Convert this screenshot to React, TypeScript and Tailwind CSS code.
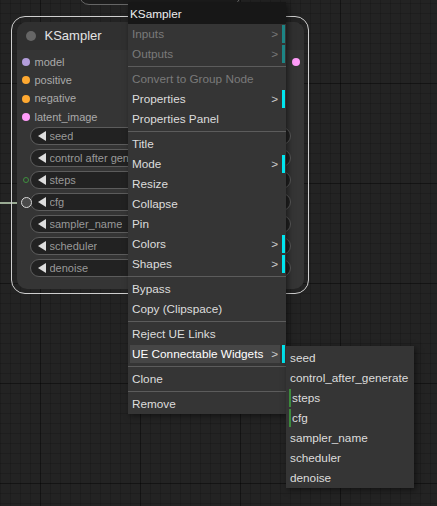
type MenuItem = { label: string; disabled?: boolean; sub?: boolean; active?: boolean } | 'sep';

const menu: MenuItem[] = [
  { label: 'Inputs', disabled: true, sub: true },
  { label: 'Outputs', disabled: true, sub: true },
  'sep',
  { label: 'Convert to Group Node', disabled: true },
  { label: 'Properties', sub: true },
  { label: 'Properties Panel' },
  'sep',
  { label: 'Title' },
  { label: 'Mode', sub: true },
  { label: 'Resize' },
  { label: 'Collapse' },
  { label: 'Pin' },
  { label: 'Colors', sub: true },
  { label: 'Shapes', sub: true },
  'sep',
  { label: 'Bypass' },
  { label: 'Copy (Clipspace)' },
  'sep',
  { label: 'Reject UE Links' },
  { label: 'UE Connectable Widgets', sub: true, active: true },
  'sep',
  { label: 'Clone' },
  'sep',
  { label: 'Remove' },
];

const subItems = [
  { label: 'seed' },
  { label: 'control_after_generate' },
  { label: 'steps', linked: true },
  { label: 'cfg', linked: true },
  { label: 'sampler_name' },
  { label: 'scheduler' },
  { label: 'denoise' },
];

const inputs = [
  { name: 'model', color: 'bg-[#b39ddb]' },
  { name: 'positive', color: 'bg-[#ffa931]' },
  { name: 'negative', color: 'bg-[#ffa931]' },
  { name: 'latent_image', color: 'bg-[#ff9cf9]' },
];

const widgets = ['seed', 'control after generate', 'steps', 'cfg', 'sampler_name', 'scheduler', 'denoise'];

const Arrow = () => (
  <svg width="8" height="10" viewBox="0 0 8 10" className="shrink-0">
    <polygon points="8,0 8,10 0,5" fill="#dddddd" />
  </svg>
);

const App = () => {
  return (
    <div className="relative w-[437px] h-[506px] overflow-hidden bg-[#232323] bg-[image:linear-gradient(to_right,rgba(0,0,0,0.35)_1px,transparent_1px),linear-gradient(to_bottom,rgba(0,0,0,0.35)_1px,transparent_1px),linear-gradient(to_right,rgba(0,0,0,0.14)_1px,transparent_1px),linear-gradient(to_bottom,rgba(0,0,0,0.14)_1px,transparent_1px)] bg-[size:100px_100px,100px_100px,10px_10px,10px_10px] bg-[position:40px_83px] font-['Liberation_Sans',Arial,sans-serif]">
      {/* bottom of the node above */}
      <div className="absolute left-[79px] top-[-20px] w-[162px] h-[25px] rounded-b-[10px] border border-[#666] bg-[#1c1c1c]" />

      {/* link into cfg */}
      <div className="absolute left-0 top-[202px] w-[22px] h-[2px] bg-[#9aab94]" />

      {/* selected node */}
      <div className="absolute left-[11px] top-[16px] w-[298px] h-[278px] rounded-[14px] border-[1.5px] border-[#cfcfcf] p-[4.5px]">
        <div className="flex h-full flex-col rounded-[10px] bg-[#353535]">
          <div className="flex h-[28px] items-center rounded-t-[10px] bg-[#303030] pl-[9px]">
            <div className="h-[10px] w-[10px] rounded-full bg-[#666]" />
            <span className="ml-[9px] pt-[1px] text-[13px] text-[#e4e4e4]">KSampler</span>
          </div>
          <div className="flex flex-col pt-[3.5px]">
            {inputs.map((inp, i) => (
              <div key={inp.name} className="flex h-[18.3px] items-center justify-between pl-[5px] pr-[4px]">
                <div className="flex items-center">
                  <div className={`h-[8px] w-[8px] rounded-full ${inp.color}`} />
                  <span className="ml-[5px] text-[11px] text-[#aaa]">{inp.name}</span>
                </div>
                {i === 0 && <div className="h-[8px] w-[8px] rounded-full bg-[#ff9cf9]" />}
              </div>
            ))}
          </div>
          <div className="flex flex-col gap-[4px] px-[13px] pt-[1px]">
            {widgets.map((w) => (
              <div key={w} className="relative flex h-[18px] items-center rounded-full border border-[#5c5c5c] bg-[#222] pl-[7px]">
                <Arrow />
                <span className="ml-[4px] max-w-[78px] overflow-hidden whitespace-nowrap text-[11px] text-[#999]">{w}</span>
                {w === 'steps' && (
                  <div className="absolute left-[-8px] top-[5px] h-[6px] w-[6px] rounded-full border border-[#3f8f3f]" />
                )}
                {w === 'cfg' && (
                  <div className="absolute left-[-10px] top-[3px] h-[11px] w-[11px] rounded-full border-[1.5px] border-[#d8d8d8] bg-[#4a4a4a]" />
                )}
              </div>
            ))}
          </div>
        </div>
      </div>

      {/* context menu */}
      <div className="absolute left-[128px] top-[2px] w-[158px] bg-[#353535] text-[11.75px] shadow-[2px_2px_6px_rgba(0,0,0,0.5)]">
        <div className="flex h-[22px] items-center bg-[#171717] pl-[2px] pt-[1px] text-[#eee]">KSampler</div>
        {menu.map((item, i) =>
          item === 'sep' ? (
            <div key={i} className="flex h-[5px] items-center">
              <div className="h-px w-full bg-[#5c5c5c]" />
            </div>
          ) : (
            <div key={i} className="flex h-[20px] items-stretch py-[1px] pl-[2px] pr-[1px]">
              <div
                className={`flex flex-1 items-center justify-between pl-[2px] pr-[2px] ${
                  item.active ? 'bg-[#464646] text-white' : item.disabled ? 'text-[#7a7a7a]' : 'text-[#ddd]'
                }`}
              >
                <span>{item.label}</span>
                {item.sub && <span className={item.disabled ? 'text-[#777]' : 'text-[#ccc]'}>&gt;</span>}
              </div>
              <div
                className={`ml-[2px] w-[3px] ${
                  item.sub ? (item.disabled ? 'bg-[#1d8585]' : 'bg-[#00e5ee]') : ''
                }`}
              />
            </div>
          )
        )}
      </div>

      {/* submenu */}
      <div className="absolute left-[286px] top-[346px] w-[128px] bg-[#353535] pt-[2px] text-[11.75px] text-[#ddd] shadow-[2px_2px_6px_rgba(0,0,0,0.5)]">
        {subItems.map((s) => (
          <div key={s.label} className="flex h-[20px] items-stretch py-[1px] pl-[3px]">
            {s.linked && <div className="w-[2px] bg-[#3c8a3c]" />}
            <span className="flex items-center pl-[1px]">{s.label}</span>
          </div>
        ))}
      </div>
    </div>
  );
};

export default App;
